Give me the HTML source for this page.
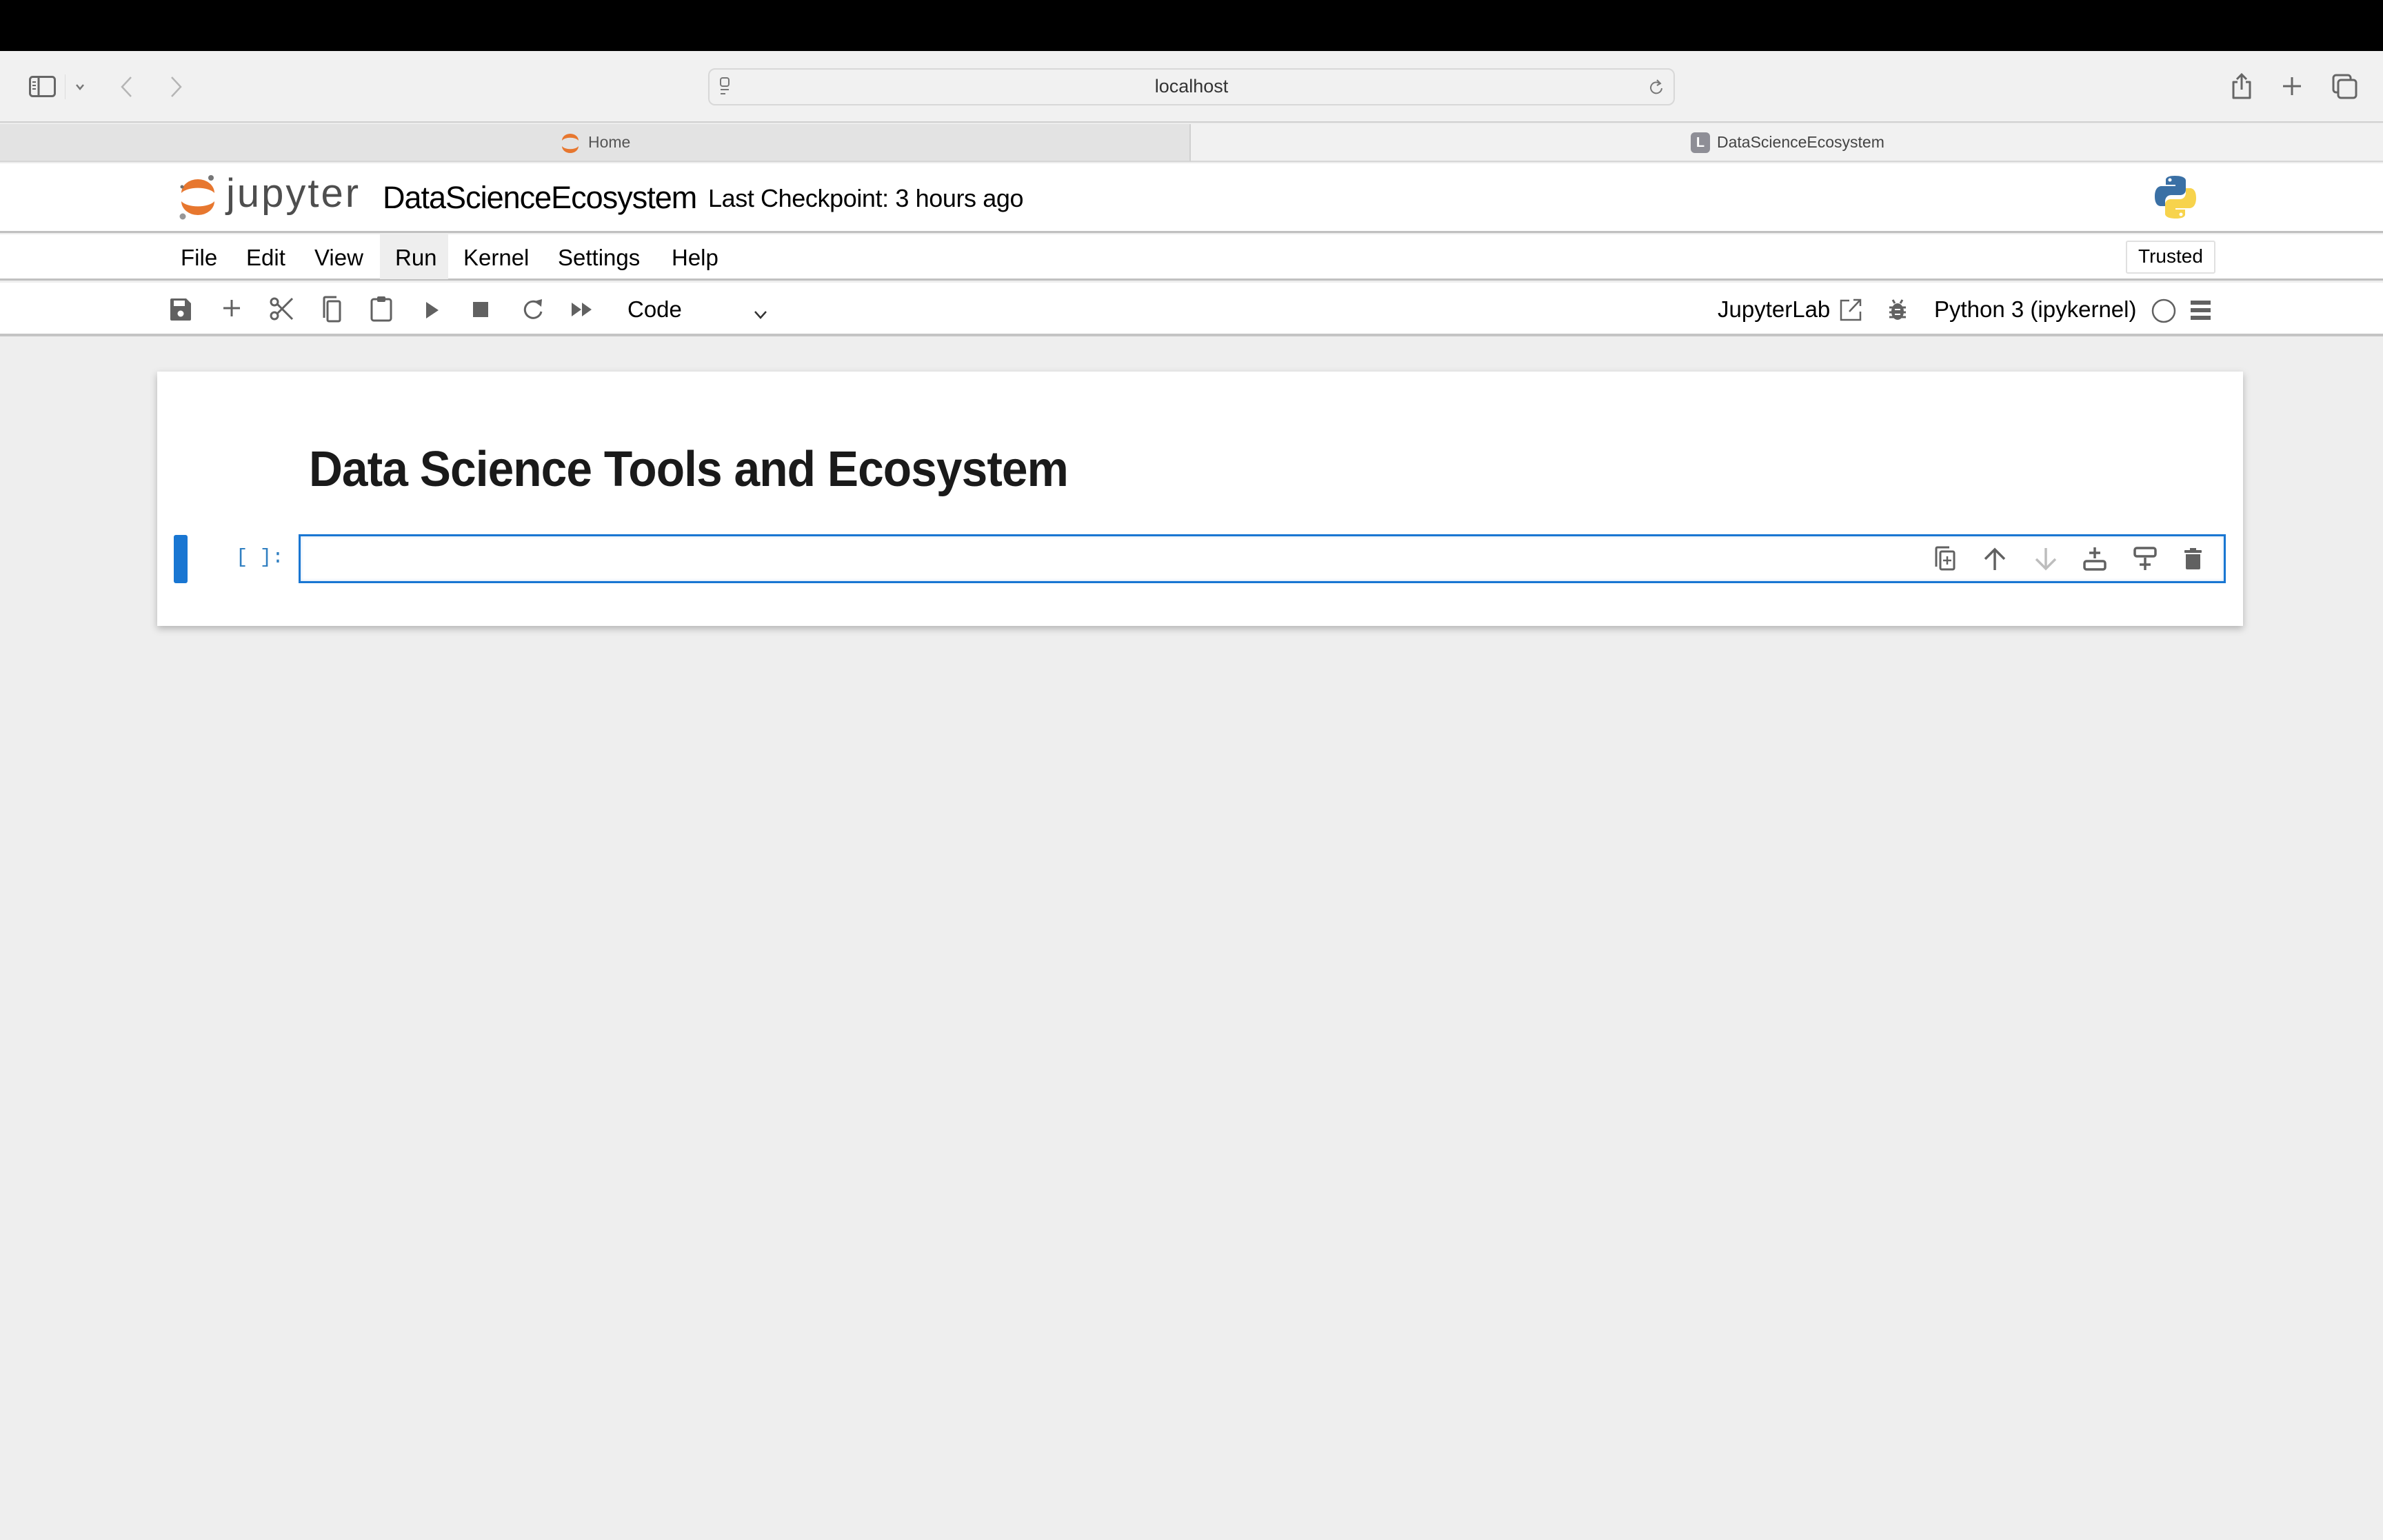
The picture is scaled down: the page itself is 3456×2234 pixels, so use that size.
<!DOCTYPE html>
<html><head><meta charset="utf-8">
<style>
*{margin:0;padding:0;box-sizing:border-box}
body{width:3456px;height:2234px;overflow:hidden;background:#eeeeee;font-family:"Liberation Sans",Arial,sans-serif;position:relative}
.a{position:absolute}
.t{position:absolute;white-space:nowrap;line-height:1}
svg{position:absolute;overflow:visible}
</style></head><body>
<div class="a" style="left:0;top:0;width:3456px;height:74px;background:#000"></div>
<div class="a" style="left:0;top:74px;width:3456px;height:104px;background:#f1f1f1;border-bottom:2px solid #cfcfcf"></div>
<svg style="left:42px;top:110px" width="40" height="32" viewBox="0 0 40 32"><rect x="1.5" y="1.5" width="36" height="28" rx="4" fill="none" stroke="#666" stroke-width="3"/><line x1="14" y1="2" x2="14" y2="30" stroke="#666" stroke-width="3"/><line x1="5" y1="9" x2="10" y2="9" stroke="#666" stroke-width="2"/><line x1="5" y1="14" x2="10" y2="14" stroke="#666" stroke-width="2"/><line x1="5" y1="19" x2="10" y2="19" stroke="#666" stroke-width="2"/></svg>
<div class="a" style="left:94px;top:108px;width:1px;height:36px;background:#ddd"></div>
<svg style="left:109px;top:120px" width="16" height="12"><polyline points="2,3 7,9 12,3" fill="none" stroke="#777" stroke-width="2.5"/></svg>
<svg style="left:174px;top:110px" width="20" height="32"><polyline points="16,2 3,16 16,30" fill="none" stroke="#b5b5b5" stroke-width="2.5"/></svg>
<svg style="left:246px;top:110px" width="20" height="32"><polyline points="3,2 16,16 3,30" fill="none" stroke="#b5b5b5" stroke-width="2.5"/></svg>
<div class="a" style="left:1027px;top:99px;width:1402px;height:54px;border:2px solid #d8d8d8;border-radius:10px;background:#f1f1f1"></div>
<svg style="left:1044px;top:112px" width="16" height="30"><rect x="1" y="1" width="12" height="12" rx="3" fill="none" stroke="#777" stroke-width="2"/><line x1="1" y1="18" x2="13" y2="18" stroke="#777" stroke-width="2"/><line x1="1" y1="24" x2="8" y2="24" stroke="#777" stroke-width="2"/></svg>
<div class="t" style="left:1628px;top:112px;width:200px;text-align:center;font-size:27px;color:#333">localhost</div>
<svg style="left:2390px;top:112px" width="24" height="28"><path d="M18 10 A8 8 0 1 0 20 16" fill="none" stroke="#777" stroke-width="2"/><polyline points="13,4 18,9 13,12" fill="none" stroke="#777" stroke-width="2"/></svg>
<svg style="left:3236px;top:105px" width="32" height="40"><path d="M9 14 H3 V37 H27 V14 H21" fill="none" stroke="#666" stroke-width="3" stroke-linejoin="round"/><line x1="15" y1="3" x2="15" y2="25" stroke="#666" stroke-width="3"/><polyline points="8,10 15,3 22,10" fill="none" stroke="#666" stroke-width="3"/></svg>
<svg style="left:3310px;top:111px" width="28" height="28"><line x1="14" y1="1" x2="14" y2="27" stroke="#666" stroke-width="3"/><line x1="1" y1="14" x2="27" y2="14" stroke="#666" stroke-width="3"/></svg>
<svg style="left:3382px;top:107px" width="38" height="38"><rect x="2" y="2" width="25" height="25" rx="4" fill="none" stroke="#666" stroke-width="3"/><rect x="9" y="9" width="26" height="26" rx="4" fill="#f1f1f1" stroke="#666" stroke-width="3"/></svg>
<div class="a" style="left:0;top:180px;width:1727px;height:55px;background:#e3e3e3;border-bottom:2px solid #d6d6d6;border-right:2px solid #d0d0d0"></div>
<div class="a" style="left:1727px;top:180px;width:1729px;height:55px;background:#f1f1f1;border-bottom:2px solid #d6d6d6"></div>
<svg style="left:812px;top:192px" width="30" height="32" viewBox="0 0 30 32"><path d="M3 12 A12 10 0 0 1 27 12 A13 7 0 0 0 3 12Z" fill="#e7772f"/><path d="M3 20 A12 10 0 0 0 27 20 A13 7 0 0 1 3 20Z" fill="#e7772f"/></svg>
<div class="t" style="left:853px;top:195px;font-size:23px;color:#555">Home</div>
<div class="a" style="left:2452px;top:192px;width:28px;height:30px;border-radius:6px;background:#8e8e96;color:#fff;font-size:20px;font-weight:bold;text-align:center;line-height:30px">L</div>
<div class="t" style="left:2490px;top:195px;font-size:23px;color:#444">DataScienceEcosystem</div>
<div class="a" style="left:0;top:237px;width:3456px;height:101px;background:#fff;border-bottom:3px solid #c0c0c0"></div>
<svg style="left:258px;top:250px" width="60" height="72" viewBox="0 0 60 72"><path d="M5 30 A24 20 0 0 1 53 30 A26 12 0 0 0 5 30Z" fill="#e7772f"/><path d="M5 42 A24 20 0 0 0 53 42 A26 12 0 0 1 5 42Z" fill="#e7772f"/><circle cx="48" cy="8" r="4" fill="#767677"/><circle cx="7" cy="64" r="4.5" fill="#989798"/><circle cx="6" cy="21" r="2.5" fill="#6f7070"/></svg>
<div class="t" style="left:328px;top:252px;font-size:58px;color:#4e4e4e;letter-spacing:3px">jupyter</div>
<div class="t" style="left:555px;top:264px;font-size:45px;color:#000;letter-spacing:-1px">DataScienceEcosystem</div>
<div class="t" style="left:1027px;top:270px;font-size:36px;color:#000;letter-spacing:-0.4px">Last Checkpoint: 3 hours ago</div>
<svg style="left:3124px;top:254px" width="62" height="64" viewBox="0 0 62 64"><path d="M30 1 C16 1 17 7 17 7 V14 H31 V16 H11 C11 16 1 15 1 31 C1 46 10 45 10 45 H16 V38 C16 38 16 29 25 29 H38 C38 29 46 29 46 21 V8 C46 8 47 1 30 1Z" fill="#3a70a5"/><circle cx="23" cy="7" r="2.5" fill="#fff"/><path d="M32 63 C46 63 45 57 45 57 V50 H31 V48 H51 C51 48 61 49 61 33 C61 18 52 19 52 19 H46 V26 C46 26 46 35 37 35 H24 C24 35 16 35 16 43 V56 C16 56 15 63 32 63Z" fill="#f7d34c"/><circle cx="39" cy="57" r="2.5" fill="#fff"/></svg>
<div class="a" style="left:0;top:340px;width:3456px;height:67px;background:#fff;border-bottom:3px solid #c0c0c0"></div>
<div class="a" style="left:551px;top:340px;width:99px;height:65px;background:#eeeeee"></div>
<div class="t" style="left:262px;top:357px;font-size:33px;color:#000">File</div>
<div class="t" style="left:357px;top:357px;font-size:33px;color:#000">Edit</div>
<div class="t" style="left:456px;top:357px;font-size:33px;color:#000">View</div>
<div class="t" style="left:573px;top:357px;font-size:33px;color:#000">Run</div>
<div class="t" style="left:672px;top:357px;font-size:33px;color:#000">Kernel</div>
<div class="t" style="left:809px;top:357px;font-size:33px;color:#000">Settings</div>
<div class="t" style="left:974px;top:357px;font-size:33px;color:#000">Help</div>
<div class="a" style="left:3083px;top:349px;width:130px;height:48px;border:2px solid #e0e0e0;border-radius:3px;background:#fff"></div>
<div class="t" style="left:3083px;top:358px;width:130px;text-align:center;font-size:28px;color:#000">Trusted</div>
<div class="a" style="left:0;top:410px;width:3456px;height:78px;background:#fff;border-bottom:4px solid #c4c4c4"></div>
<svg style="left:246px;top:432px" width="32" height="34" viewBox="0 0 32 34"><path d="M3 1 H24 L31 8 V31 Q31 33 29 33 H3 Q1 33 1 31 V3 Q1 1 3 1Z" fill="#616161"/><rect x="6" y="4" width="16" height="8" fill="#fff"/><circle cx="16" cy="23" r="4.5" fill="#fff"/></svg>
<svg style="left:322px;top:433px" width="28" height="28"><line x1="14" y1="2" x2="14" y2="26" stroke="#616161" stroke-width="3"/><line x1="2" y1="14" x2="26" y2="14" stroke="#616161" stroke-width="3"/></svg>
<svg style="left:390px;top:430px" width="36" height="36" viewBox="0 0 36 36"><circle cx="8" cy="28" r="5" fill="none" stroke="#616161" stroke-width="3"/><circle cx="8" cy="8" r="5" fill="none" stroke="#616161" stroke-width="3"/><line x1="12" y1="11" x2="34" y2="33" stroke="#616161" stroke-width="3"/><line x1="12" y1="25" x2="34" y2="3" stroke="#616161" stroke-width="3"/></svg>
<svg style="left:464px;top:430px" width="32" height="38"><path d="M6 31 V3 Q6 1 8 1 H24" fill="none" stroke="#616161" stroke-width="3"/><rect x="11" y="7" width="18" height="29" rx="2" fill="none" stroke="#616161" stroke-width="3"/></svg>
<svg style="left:537px;top:428px" width="34" height="40"><rect x="2" y="6" width="28" height="31" rx="3" fill="none" stroke="#616161" stroke-width="3"/><rect x="10" y="2" width="12" height="8" rx="2" fill="#616161"/></svg>
<svg style="left:616px;top:437px" width="22" height="26"><polygon points="2,1 20,13 2,25" fill="#616161"/></svg>
<svg style="left:686px;top:438px" width="22" height="22"><rect x="0" y="0" width="22" height="22" fill="#616161"/></svg>
<svg style="left:757px;top:432px" width="32" height="34"><path d="M25 9 A12 12 0 1 0 28 20" fill="none" stroke="#616161" stroke-width="3"/><polygon points="18,5 29,2 28,13" fill="#616161"/></svg>
<svg style="left:828px;top:438px" width="32" height="22"><polygon points="1,1 15,11 1,21" fill="#616161"/><polygon points="16,1 30,11 16,21" fill="#616161"/></svg>
<div class="t" style="left:910px;top:432px;font-size:33px;color:#000">Code</div>
<svg style="left:1093px;top:450px" width="20" height="14"><polyline points="2,2 10,11 18,2" fill="none" stroke="#333" stroke-width="2.5"/></svg>
<div class="t" style="left:2491px;top:432px;font-size:33px;color:#000">JupyterLab</div>
<svg style="left:2668px;top:432px" width="32" height="34"><path d="M14 4 H2 V32 H30 V20" fill="none" stroke="#616161" stroke-width="2.5"/><line x1="14" y1="20" x2="30" y2="3" stroke="#616161" stroke-width="2.5"/><polyline points="20,3 30,3 30,12" fill="none" stroke="#616161" stroke-width="2.5"/></svg>
<svg style="left:2739px;top:434px" width="26" height="32" viewBox="0 0 26 32"><ellipse cx="13" cy="18" rx="9" ry="12" fill="#616161"/><line x1="1" y1="12" x2="25" y2="12" stroke="#616161" stroke-width="3"/><line x1="1" y1="19" x2="25" y2="19" stroke="#616161" stroke-width="3"/><line x1="1" y1="26" x2="25" y2="26" stroke="#616161" stroke-width="3"/><line x1="6" y1="1" x2="9" y2="6" stroke="#616161" stroke-width="3"/><line x1="20" y1="1" x2="17" y2="6" stroke="#616161" stroke-width="3"/><line x1="9" y1="15" x2="17" y2="15" stroke="#fff" stroke-width="2"/><line x1="9" y1="22" x2="17" y2="22" stroke="#fff" stroke-width="2"/></svg>
<div class="t" style="left:2805px;top:432px;font-size:33px;color:#000">Python 3 (ipykernel)</div>
<svg style="left:3119px;top:432px" width="38" height="38"><circle cx="19" cy="19" r="16" fill="none" stroke="#616161" stroke-width="2.5"/></svg>
<svg style="left:3177px;top:435px" width="30" height="30"><rect x="0" y="1" width="29" height="6" fill="#616161"/><rect x="0" y="12" width="29" height="6" fill="#616161"/><rect x="0" y="23" width="29" height="6" fill="#616161"/></svg>
<div class="a" style="left:228px;top:539px;width:3025px;height:369px;background:#fff;box-shadow:0 4px 10px rgba(0,0,0,0.25)"></div>
<div class="t" style="left:448px;top:645px;font-size:72px;font-weight:bold;color:#1a1a1a;transform:scaleX(0.94);transform-origin:left top;letter-spacing:-1px">Data Science Tools and Ecosystem</div>
<div class="a" style="left:252px;top:776px;width:20px;height:70px;background:#1976d2;border-radius:3px"></div>
<div class="t" style="left:342px;top:794px;font-family:'Liberation Mono',monospace;font-size:29px;color:#307fc1">[ ]:</div>
<div class="a" style="left:433px;top:775px;width:2795px;height:71px;border:3px solid #1976d2;background:#fff;box-shadow:inset 0 0 4px rgba(25,118,210,0.25)"></div>
<svg style="left:2805px;top:792px" width="32" height="36"><path d="M3 30 V4 Q3 2 5 2 H22" fill="none" stroke="#616161" stroke-width="3"/><rect x="9" y="8" width="20" height="26" rx="2" fill="none" stroke="#616161" stroke-width="3"/><line x1="19" y1="15" x2="19" y2="27" stroke="#616161" stroke-width="2.5"/><line x1="13" y1="21" x2="25" y2="21" stroke="#616161" stroke-width="2.5"/></svg>
<svg style="left:2876px;top:794px" width="34" height="34"><line x1="17" y1="3" x2="17" y2="33" stroke="#616161" stroke-width="3.5"/><polyline points="3,17 17,3 31,17" fill="none" stroke="#616161" stroke-width="3.5"/></svg>
<svg style="left:2950px;top:794px" width="34" height="34"><line x1="17" y1="1" x2="17" y2="31" stroke="#bdbdbd" stroke-width="3.5"/><polyline points="3,17 17,31 31,17" fill="none" stroke="#bdbdbd" stroke-width="3.5"/></svg>
<svg style="left:3021px;top:793px" width="34" height="36"><line x1="17" y1="1" x2="17" y2="17" stroke="#616161" stroke-width="3.5"/><line x1="9" y1="9" x2="25" y2="9" stroke="#616161" stroke-width="3.5"/><rect x="2" y="21" width="30" height="12" rx="3" fill="none" stroke="#616161" stroke-width="3.5"/></svg>
<svg style="left:3094px;top:793px" width="34" height="36"><rect x="2" y="2" width="30" height="12" rx="3" fill="none" stroke="#616161" stroke-width="3.5"/><line x1="17" y1="16" x2="17" y2="34" stroke="#616161" stroke-width="3.5"/><line x1="9" y1="26" x2="25" y2="26" stroke="#616161" stroke-width="3.5"/></svg>
<svg style="left:3168px;top:795px" width="26" height="32"><rect x="0" y="3" width="25" height="4" rx="1" fill="#616161"/><rect x="8" y="0" width="9" height="4" fill="#616161"/><path d="M2 9 H23 V29 Q23 31 21 31 H4 Q2 31 2 29Z" fill="#616161"/></svg>
</body></html>
